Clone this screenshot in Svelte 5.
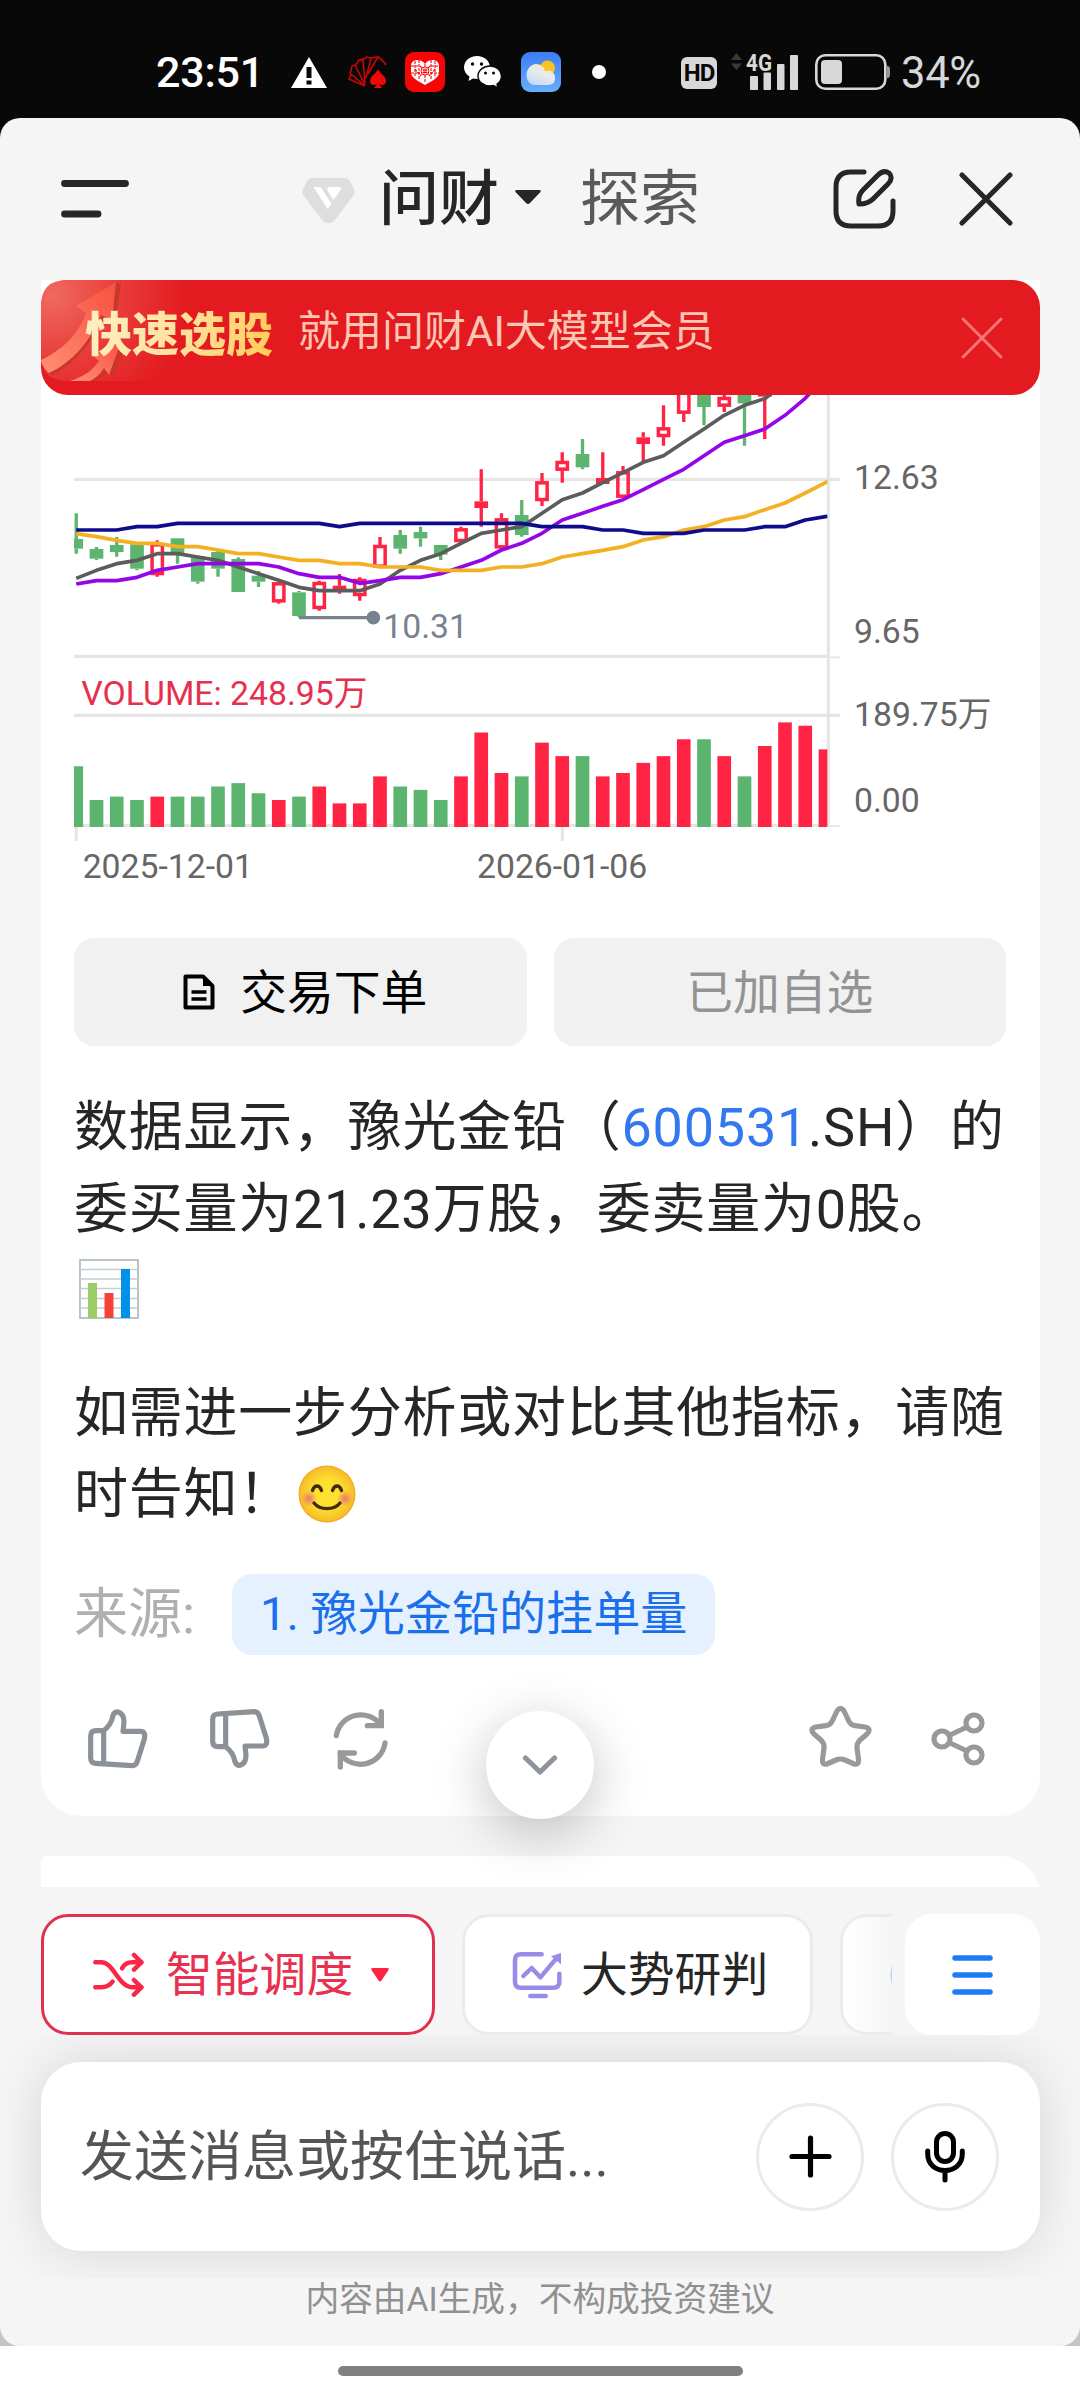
<script>
	const RED = '#ff2444';
	const GREEN = '#5bb56e';

	// x of the middle of the candle at index i
	const cx = (i) => 108.75 + i * 60.75;

	// [color, high, body top, body bottom, low, hollow]
	const candles = [
		['g', 400, 477, 506, 521],
		['g', 501, 507, 536, 540],
		['g', 471, 495, 516, 530],
		['g', 490, 493, 566, 571],
		['r', 481, 490, 585, 590, true],
		['g', 475, 475, 523, 551],
		['g', 530, 530, 605, 611],
		['g', 513, 516, 566, 590],
		['g', 532, 537, 636, 636],
		['g', 573, 587, 605, 621],
		['r', 605, 607, 667, 671, true],
		['g', 633, 637, 708, 712],
		['r', 602, 606, 687, 692, true],
		['r', 582, 617, 630, 641],
		['r', 592, 597, 648, 662, true],
		['r', 471, 495, 563, 563, true],
		['g', 450, 465, 506, 521],
		['g', 440, 456, 475, 500],
		['g', 495, 495, 524, 540],
		['r', 440, 445, 486, 487, true],
		['r', 268, 364, 384, 440],
		['r', 400, 415, 505, 507, true],
		['g', 360, 405, 465, 470],
		['r', 279, 304, 363, 378, true],
		['r', 217, 243, 272, 308, true],
		['g', 177, 222, 262, 268],
		['r', 217, 294, 312, 312],
		['r', 258, 274, 353, 353, true],
		['r', 157, 172, 192, 243],
		['r', 76, 142, 171, 197, true],
		['r', 20, 20, 101, 126, true],
		['g', 20, 20, 81, 136],
		['r', 20, 51, 80, 96, true],
		['g', 20, 20, 70, 197],
		['r', 20, 20, 50, 177]
	];

	const volumes = [
		18, 8, 9, 8, 9, 9, 9, 12, 13, 10, 8, 9, 12, 7, 7, 15, 12, 11, 8, 15, 28, 16, 15, 25, 21, 21, 15,
		16, 19, 21, 26, 26, 21, 15, 24, 31, 30, 23
	];
	const volumeColors = 'ggggrgggggrgrrrrgggrrrgrrgrrrrrgrgrrrr';

	const averages = [
		{
			color: '#5c5c5c',
			points: [
				595, 571, 551, 541, 521, 521, 531, 541, 561, 581, 601, 622, 632, 632, 632, 612, 571, 541, 521,
				490, 460, 450, 440, 400, 359, 339, 308, 278, 247, 227, 187, 147, 106, 76, 56, 10
			]
		},
		{
			color: '#9406e6',
			points: [
				612, 602, 602, 592, 571, 561, 551, 551, 551, 551, 561, 581, 592, 592, 610, 602, 592, 592, 581,
				561, 541, 510, 490, 460, 420, 400, 379, 359, 329, 298, 268, 227, 187, 167, 147, 106, 55, -10
			]
		},
		{
			color: '#f3b021',
			points: [
				461, 470, 481, 490, 490, 500, 500, 510, 521, 521, 531, 541, 541, 551, 551, 561, 561, 561, 571,
				571, 571, 561, 561, 551, 531, 521, 511, 500, 480, 470, 450, 440, 420, 410, 389, 369, 339, 308,
				280
			]
		},
		{
			color: '#0c0c8c',
			points: [
				450, 450, 450, 440, 440, 430, 430, 430, 430, 430, 430, 430, 430, 440, 430, 430, 430, 430, 430,
				430, 430, 430, 430, 440, 440, 440, 450, 450, 460, 460, 460, 450, 450, 450, 440, 440, 420, 410,
				400
			]
		}
	];

	const toLine = (points) => points.map((y, i) => `${cx(i)},${y}`).join(' ');
	const fill = (c) => (c === 'r' ? RED : GREEN);

	const axisLabels = [
		{ text: '12.63', y: 328 },
		{ text: '9.65', y: 788 },
		{ text: '189.75万', y: 1038 },
		{ text: '0.00', y: 1295 }
	];
</script>

<div class="status-bar">
	<span class="time">23:51</span>
	<svg class="warn" width="36" height="31" viewBox="0 0 36 31">
		<path d="M18 0 36 31H0z" fill="#fff" />
		<path d="M15.500 10h5v11h-5zM15.500 23.500h5v4h-5z" fill="#080808" />
	</svg>
	<svg class="cards" width="40" height="34" viewBox="0 0 40 34">
		<g fill="none" stroke="#c80505" stroke-width="1.600">
			<path d="M18 31 2 24l2-5 14 12M3 19l2-8 3-1 10 20M8 11l4-6 4-1 2 24M14 6l6-4 4 1-5 20M22 3l9-1-10 17M31 2c4 2 6 5 8 8" />
		</g>
		<path d="M31 14c2 5 8 7 8 12 0 4-4 5-7 3l3 4h-8l3-4c-3 2-7 1-7-3 0-5 6-7 8-12z" fill="#f00808" />
	</svg>
	<svg class="heart" width="40" height="40" viewBox="0 0 40 40">
		<rect width="40" height="40" rx="9" fill="#f70505" />
		<path d="M20 12c4-6 14-5 14 2v7c0 5-9 9-14 12C15 30 6 26 6 21v-7c0-7 10-8 14-2z" fill="#fff" />
		<path
			d="M10 9v16M14 8v20M26 8v20M30 9v16M6 14h8M6 21h9M26 14h8M25 21h9M20 12v4M20 23v8M15 14l10 10M25 14 15 24M10 17l4 5M30 17l-4 5"
			stroke="#f70505"
			stroke-width="1.100"
			stroke-dasharray="3 1"
			fill="none"
		/>
		<circle cx="20" cy="19" r="4" fill="#fff" stroke="#f70505" />
		<path d="M17.500 18h5M17.500 20.500h5M19 16.500v5M21 16.500v5" stroke="#f70505" />
	</svg>
	<svg class="wechat" width="38" height="33" viewBox="0 0 38 33">
		<path d="M13 0c7.500 0 13 5 13 11.500S20 23 13 23l-4-.5L4.500 25l1-4.500C2 18.500 0 15 0 11.500 0 5 5.500 0 13 0z" fill="#fff" />
		<path d="M26 10c6.500 0 11.500 4.300 11.500 10 0 3.200-1.500 6-4.500 8l1 3.800-4.500-2.300-3.500.5c-6.500 0-12-4.300-12-10s5.500-10 12-10z" fill="#fff" stroke="#080808" stroke-width="1.400" />
		<g fill="#080808">
			<circle cx="8.500" cy="8" r="1.700" />
			<circle cx="17.500" cy="8" r="1.700" />
			<circle cx="21.500" cy="17" r="1.500" />
			<circle cx="29.500" cy="17" r="1.500" />
		</g>
	</svg>
	<svg class="weather" width="40" height="40" viewBox="0 0 40 40">
		<defs>
			<linearGradient id="sky" x2="0" y2="1">
				<stop offset="0" stop-color="#3c7df5" />
				<stop offset="1" stop-color="#69aefb" />
			</linearGradient>
			<linearGradient id="cloud" x1="1" y1="0" x2="0.400" y2="1">
				<stop offset="0" stop-color="#fbe29a" />
				<stop offset="0.500" stop-color="#e9ecee" />
				<stop offset="1" stop-color="#c9dcf0" />
			</linearGradient>
		</defs>
		<rect width="40" height="40" rx="9" fill="url(#sky)" />
		<circle cx="26.500" cy="16" r="7.500" fill="#fcc21f" />
		<path d="M15 12c5 0 8 3 9 7 6-2 10 2 10 7s-3 7-7 7H14c-5 0-8.500-4-8.500-10S10 12 15 12z" fill="url(#cloud)" />
	</svg>
	<span class="dot"></span>

	<span class="hd">HD</span>
	<svg class="signal" width="68" height="48" viewBox="0 -10 68 48">
		<path d="M5.500 0 11 7H0zM5.500 17 0 10.500h11z" fill="#3a3a3a" />
		<text x="15" y="18" class="net" textLength="26" lengthAdjust="spacingAndGlyphs">4G</text>
		<g fill="#d8d8d8">
			<rect x="19" y="23" width="8" height="14" rx="1" />
			<rect x="32.500" y="19.500" width="7.500" height="17.500" rx="1" />
			<rect x="46" y="11" width="7.500" height="26" rx="1" />
			<rect x="59" y="2" width="8" height="35" rx="1" />
		</g>
	</svg>
	<svg class="battery" width="76" height="36" viewBox="0 0 76 36">
		<rect x="1.300" y="1.300" width="69" height="33.400" rx="9" fill="none" stroke="#d8d8d8" stroke-width="2.600" />
		<rect x="6" y="6" width="21" height="24" rx="4" fill="#d8d8d8" />
		<path d="M72 12c3 0 3 2 3 6s0 6-3 6z" fill="#9a9a9a" />
	</svg>
	<span class="percent">34%</span>
</div>

<div class="backdrop">
	<div class="sheet">
		<header>
			<svg class="menu" width="68" height="38" viewBox="0 0 68 38">
				<path d="M3.500 3.500h61M3.500 34h33.500" stroke="#262626" stroke-width="6.800" stroke-linecap="round" />
			</svg>
			<svg class="vip" width="53" height="45" viewBox="0 0 53 45">
				<path d="M10 0h33q3 0 5 3l4.300 9q1.400 2.500-.5 5L33 42q-2 3-6.500 3T20 42L1.200 17q-1.900-2.500-.5-5L5 3q2-3 5-3z" fill="#dedede" />
				<path d="M11.500 9h6q1.500 0 2.500 2l9.500 15-4 5zM27.500 9H37q3 0 1.500 3l-7 10-5.500-8.500q-2-4.500 1.500-4.500z" fill="#fff" />
			</svg>
			<span class="tab active">问财</span>
			<svg class="caret" width="26" height="15" viewBox="0 0 26 15">
				<path d="M2 0h22q3 0 1 2.500L15 13q-2 2-4 0L1 2.500Q-1 0 2 0z" fill="#262626" />
			</svg>
			<span class="tab">探索</span>
			<svg class="edit" width="63" height="60" viewBox="0 0 63 60">
				<g fill="none" stroke="#262626" stroke-width="5" stroke-linecap="round" stroke-linejoin="round">
					<path d="M31 3H18C8 3 3 8 3 18v24c0 10 5 15 15 15h27c10 0 15-5 15-15V32" />
					<path d="M26 35c-1-6 0-10 4-14L45 6c4-4 8-4 11-2 3 3 3 7-1 11L40 30c-4 4-8 5-14 5z" />
				</g>
			</svg>
			<svg class="close" width="54" height="54" viewBox="0 0 54 54">
				<path d="m3 3 48 48M51 3 3 51" stroke="#262626" stroke-width="5" stroke-linecap="round" />
			</svg>
		</header>

		<div class="scroll">
			<div class="card">
				<div class="banner">
					<svg class="banner-art" width="150" height="101" viewBox="0 0 150 101">
						<defs>
							<radialGradient id="glow" cx="12" cy="15" r="135" gradientUnits="userSpaceOnUse">
								<stop offset="0" stop-color="#f0695f" />
								<stop offset="0.500" stop-color="#e83b3a" />
								<stop offset="1" stop-color="#e31b20" />
							</radialGradient>
							<linearGradient id="arrow" x1="1" y1="0" x2="0" y2="1">
								<stop offset="0" stop-color="#f8503f" />
								<stop offset="1" stop-color="#ff8f73" />
							</linearGradient>
						</defs>
						<path d="M26 0h124v101H26Q0 101 0 75V26Q0 0 26 0z" fill="url(#glow)" />
						<path d="m75 2 5 2-6 40-12-6C52 62 32 85 12 95l-4-2z" fill="#c8372b" />
						<path d="m75 2-4 38-11-5C50 60 32 82 8 93Q1 87 0 80c20-9 38-26 45-47l-10-7z" fill="url(#arrow)" />
						<path d="m81 65 3 2-12 29-5-3-14 8h-8z" fill="#c8372b" />
						<path d="m80 62-12 33-5-7c-4 6-8 10-14 13H29c13-4 22-10 29-20l-6-5z" fill="url(#arrow)" />
					</svg>
					<span class="banner-title">快速选股</span>
					<span class="banner-text">就用问财AI大模型会员</span>
					<svg width="42" height="42" viewBox="0 0 42 42">
						<path d="m2 2 38 38M40 2 2 40" stroke="#f57675" stroke-width="3" stroke-linecap="round" />
					</svg>
				</div>

				<svg class="chart" width="932" height="510" viewBox="102 45 2796 1530">
					<defs>
						<clipPath id="plot"><rect x="102" y="45" width="2260" height="1300" /></clipPath>
					</defs>
					<g stroke="#e5e5e5" stroke-width="9.500">
						<path d="M102 298H2400M102 829H2362M102 1006H2400M102 1336.500H2362M2365 45V1341" />
						<path d="M2362 832H2400M2362 1338H2400" stroke-width="5" />
						<path d="M108.500 1341v42M1567 1341v42" />
					</g>

					<g clip-path="url(#plot)">
						{#each volumes as v, i}
							<rect x={cx(i) - 20.5} y={1341 - v * 10.125} width="41" height={v * 10.125} fill={fill(volumeColors[i])} />
						{/each}

						{#each candles as [c, high, top, bottom, low, hollow], i}
							<path d="M{cx(i)} {high}V{top}M{cx(i)} {bottom}V{low}" stroke={fill(c)} stroke-width="10" />
							{#if hollow}
								<rect x={cx(i) - 15.5} y={top + 4.5} width="31" height={bottom - top - 9} fill="none" stroke={fill(c)} stroke-width="10.500" />
							{:else}
								<rect x={cx(i) - 20.5} y={top} width="41" height={bottom - top} fill={fill(c)} />
							{/if}
						{/each}

						{#each averages as { color, points }}
							<polyline points={toLine(points)} fill="none" stroke={color} stroke-width="11" stroke-linejoin="round" />
						{/each}
					</g>

					<path d="M777 713H1000" stroke="#78828f" stroke-width="10" />
					<circle cx="1000" cy="713" r="20.500" fill="#78828f" />
					<text x="1030" y="773" fill="#78828f">10.31</text>
					<text x="124" y="975" fill="#e5304e">VOLUME: 248.95万</text>

					<g fill="#666">
						{#each axisLabels as label}
							<text x="2442" y={label.y}>{label.text}</text>
						{/each}
						<text x="128" y="1493">2025-12-01</text>
						<text x="1311" y="1493">2026-01-06</text>
					</g>
				</svg>

				<div class="buttons">
					<button class="trade">
						<svg width="32" height="36" viewBox="0 0 32 36">
							<path d="M2.500 2.500h17.500L29.500 12v21.500h-27z" fill="none" stroke="#000" stroke-width="4" stroke-linejoin="round" />
							<path d="M20 2v10h10z" />
							<path d="M8.500 18h15M8.500 25h15" stroke="#000" stroke-width="3.400" />
						</svg>
						<span>交易下单</span>
					</button>
					<button class="added"><span>已加自选</span></button>
				</div>

				<p>
					数据显示，豫光金铅（<a href="#stock">600531</a>.SH）的<br />委买量为21.23万股，委卖量为0股。<br />
					<svg class="emoji" width="60" height="60" viewBox="0 0 60 60">
						<rect x="1" y="1" width="58" height="58" fill="#fff" stroke="#b0bec5" stroke-width="1.800" />
						<path d="M1 10.500h58M1 20h58M1 29.500h58M1 39.500h58M1 49h58" stroke="#c4ced3" stroke-width="1.600" />
						<path d="M9 24h9v35H9z" fill="#9ccc65" />
						<path d="M25.500 34h9v25h-9z" fill="#f44336" />
						<path d="M42 10h9v49h-9z" fill="#0091ea" />
					</svg>
				</p>

				<p>
					如需进一步分析或对比其他指标，请随<br />时告知！<svg class="emoji" width="58" height="58" viewBox="0 0 58 58">
						<defs>
							<radialGradient id="face">
								<stop offset="0.500" stop-color="#fde030" />
								<stop offset="0.920" stop-color="#f7c02b" />
								<stop offset="1" stop-color="#f4a223" />
							</radialGradient>
							<radialGradient id="blush">
								<stop offset="0" stop-color="#ed7770" />
								<stop offset="1" stop-color="#ed7770" stop-opacity="0" />
							</radialGradient>
						</defs>
						<circle cx="29" cy="29" r="28.500" fill="url(#face)" />
						<circle cx="11" cy="33.500" r="8" fill="url(#blush)" />
						<circle cx="47" cy="33.500" r="8" fill="url(#blush)" />
						<g fill="none" stroke="#422b0d" stroke-width="3.400" stroke-linecap="round">
							<path d="M14.500 25.500c2-6 7-6 9 0M34.500 25.500c2-6 7-6 9 0" />
							<path d="M16 38c6 7.500 20 7.500 26 0" />
						</g>
					</svg>
				</p>

				<div class="sources">
					<span>来源:</span>
					<a class="source" href="#source">1. 豫光金铅的挂单量</a>
				</div>

				<div class="actions">
					<svg class="up" width="60" height="60" viewBox="0 0 180 180">
						<g fill="none" stroke="#8c9197" stroke-width="15.500" stroke-linejoin="round">
							<path d="M47 65H24Q8 65 8 81v66q0 15 15 16l110 7q11 0 15-13l21-67q5-23-12-23h-52l3-28q0-25-18-30-12-2-16 14-4 24-27 42z" />
							<path d="M47 65v98" />
						</g>
					</svg>
					<svg class="down" width="60" height="60" viewBox="0 0 180 180">
						<g transform="translate(0 178) scale(1 -1)" fill="none" stroke="#8c9197" stroke-width="15.500" stroke-linejoin="round">
							<path d="M47 65H24Q8 65 8 81v66q0 15 15 16l110 7q11 0 15-13l21-67q5-23-12-23h-52l3-28q0-25-18-30-12-2-16 14-4 24-27 42z" />
							<path d="M47 65v98" />
						</g>
					</svg>
					<svg class="refresh" width="55" height="62" viewBox="0 0 165 186">
						<g fill="none" stroke="#999" stroke-width="16" stroke-linecap="round">
							<path d="M10 83A74 74 0 0 1 143 51M156 105A74 74 0 0 1 22 137" />
							<path d="M145 11v42h-42M22 177v-42h42" />
						</g>
					</svg>
					<svg class="star" width="63" height="61" viewBox="0 0 63 61">
						<path
							d="M27.500 6Q31.500-1 35.500 6L40 15.500Q42 19 46 19.700L56 21Q63 23 58 28L50.500 34.500Q47.500 38 48 42L49.500 53.500Q50 60 44 57.500L36 54Q31.500 52 27 54L19 57.500Q13 60 13.500 53.500L15 42Q15.500 38 12.500 34.500L5 28Q0 23 7 21L17 19.700Q21 19 23 15.500Z"
							fill="none"
							stroke="#999"
							stroke-width="5.200"
							stroke-linejoin="round"
						/>
					</svg>
					<svg width="54" height="54" viewBox="0 0 54 54">
						<g fill="none" stroke="#999" stroke-width="5.200">
							<circle cx="11" cy="27" r="8" />
							<circle cx="43" cy="11" r="8" />
							<circle cx="43" cy="43" r="8" />
							<path d="m18 23.500 18-8.500M18 30.500l18 8.500" />
						</g>
					</svg>
				</div>
			</div>

			<div class="card next"></div>

			<button class="to-bottom" aria-label="scroll">
				<svg width="36" height="22" viewBox="0 0 36 22">
					<path d="m3.500 4 14.500 14L32.500 4" fill="none" stroke="#8f939b" stroke-width="5.200" stroke-linecap="round" stroke-linejoin="round" />
				</svg>
			</button>
		</div>

		<div class="modes">
			<div class="mode selected">
				<svg width="51" height="45" viewBox="0 0 153 135">
					<g fill="none" stroke="#fb2646" stroke-width="13.500" stroke-linecap="round" stroke-linejoin="round">
						<path d="M7 31h18c38 0 50 75 95 75h25M7 106h18q20 0 34-17M87 49q10-18 30-18h28" />
						<path d="m123 9 22 22-22 22M123 84l22 22-22 22" />
					</g>
				</svg>
				<span>智能调度</span>
				<svg class="mode-caret" width="18" height="14" viewBox="0 0 18 14">
					<path d="M1.500 0h15q2 0 1 2l-7 10.500q-1.500 2-3 0L.500 2Q-.5 0 1.500 0z" fill="#ff2444" />
				</svg>
			</div>
			<div class="mode market">
				<svg width="50" height="48" viewBox="0 0 150 144">
					<g fill="none" stroke="#978de8" stroke-width="13.500" stroke-linecap="round" stroke-linejoin="round">
						<path d="M89 10H26Q9 10 9 27v66q0 17 17 17h98q18 0 18-17V68" />
						<path d="m34 75 25-24 26 28 45-53M55 135h46" />
					</g>
					<path d="M147 6v34l-30-24z" fill="#978de8" />
				</svg>
				<span>大势研判</span>
			</div>
			<div class="mode cut">
				<svg width="2" height="20" viewBox="0 0 2 20">
					<path d="M2 0Q-1 10 2 20z" fill="#b9d2f5" />
				</svg>
			</div>
			<button class="all-modes" aria-label="modes">
				<svg width="41" height="42" viewBox="0 0 41 42">
					<path d="M3 4h35M3 21h35M3 38h35" stroke="#1e7bf6" stroke-width="5.500" stroke-linecap="round" />
				</svg>
			</button>
		</div>

		<div class="composer">
			<div class="input">
				<span>发送消息或按住说话...</span>
				<button aria-label="add">
					<svg width="43" height="43" viewBox="0 0 43 43">
						<path d="M21.500 3v37M3 21.500h37" stroke="#000" stroke-width="5.200" stroke-linecap="round" />
					</svg>
				</button>
				<button aria-label="voice">
					<svg width="40" height="52" viewBox="0 0 40 52">
						<g fill="none" stroke="#000" stroke-width="5" stroke-linecap="round">
							<rect x="11.500" y="2.500" width="17" height="28" rx="8.500" />
							<path d="M2.700 20v3c0 22 34.600 22 34.600 0v-3M20 40v9" />
						</g>
					</svg>
				</button>
			</div>
		</div>

		<footer>内容由AI生成，不构成投资建议</footer>
	</div>
</div>

<div class="nav"><span></span></div>

<style>
	:global(body) {
		background: #fff;
		font-family: Roboto, 'Noto Sans CJK SC', sans-serif;
		color: #262626;
	}

	svg {
		display: block;
		flex: none;
	}

	button {
		border: none;
		padding: 0;
		font: inherit;
		display: flex;
		align-items: center;
		justify-content: center;
	}

	a {
		color: #3478f0;
		text-decoration: none;
	}

	.status-bar {
		display: flex;
		align-items: center;
		box-sizing: border-box;
		height: 118px;
		padding: 26px 0 0 156px;
		background: #080808;
		color: #fff;
	}

	.time {
		width: 135px;
		font-size: 43px;
		font-weight: 500;
		letter-spacing: -0.2px;
	}

	.cards {
		margin-left: 20px;
	}

	.heart {
		margin-left: 18px;
	}

	.wechat {
		margin-left: 19px;
	}

	.weather {
		margin-left: 19px;
	}

	.dot {
		width: 14px;
		height: 14px;
		margin-left: 31px;
		border-radius: 50%;
		background: #fff;
	}

	.hd {
		width: 36px;
		height: 32px;
		margin: 2px 0 0 75px;
		border-radius: 6px;
		background: #d8d8d8;
		color: #080808;
		font-size: 24px;
		font-weight: 700;
		line-height: 33px;
		text-align: center;
		letter-spacing: -1px;
	}

	.signal {
		margin: -10px 0 0 14px;
	}

	.net {
		fill: #d8d8d8;
		font-size: 24px;
		font-weight: 700;
	}

	.battery {
		margin-left: 16px;
	}

	.percent {
		margin: 3px 0 0 10px;
		color: #d8d8d8;
		font-size: 43.5px;
		letter-spacing: -0.3px;
	}

	.backdrop {
		background: linear-gradient(#080808 50%, #c4c4c4 50%);
	}

	.sheet {
		height: 2228px;
		border-radius: 20px;
		background: #f5f5f5;
		overflow: hidden;
	}

	header {
		display: flex;
		align-items: center;
		height: 162px;
		padding-left: 61px;
	}

	.vip {
		margin-left: 173px;
		margin-top: 3px;
	}

	.tab {
		margin-top: 2px;
		font-size: 60px;
		line-height: 80px;
		color: #5a5a5a;
	}

	.tab.active {
		margin-left: 24px;
		color: #262626;
		font-weight: 500;
	}

	.caret {
		margin: -3px 39px 0 16px;
	}

	.edit {
		margin-left: 133px;
	}

	.close {
		margin-left: 63px;
	}

	.scroll {
		position: relative;
		height: 1607px;
		overflow: hidden;
	}

	.card {
		width: 932px;
		height: 1536px;
		margin-left: 41px;
		padding: 0 34px 0 33px;
		border-radius: 0 0 40px 40px;
		background: #fff;
	}

	.card.next {
		height: 60px;
		margin-top: 40px;
		border-radius: 6px 40px 0 0;
	}

	.banner {
		position: relative;
		display: flex;
		align-items: center;
		width: 918px;
		height: 115px;
		margin-left: -33px;
		padding: 0 37px 0 44px;
		border-radius: 27px;
		background: #e31b20;
	}

	.banner-art {
		position: absolute;
		left: 0;
		top: 0;
	}

	.banner-title {
		position: relative;
		margin-top: -14px;
		font-size: 47px;
		font-weight: 900;
		background: linear-gradient(100deg, #fff0c4, #ffe09a 55%, #ffcb55);
		background-clip: text;
		color: transparent;
	}

	.banner-text {
		flex: 1;
		margin: -20px 0 0 25px;
		font-size: 42px;
		color: #ffc6b4;
	}

	.chart {
		font-size: 101.2px;
	}

	.buttons {
		display: grid;
		grid-template-columns: 1fr 1fr;
		gap: 27px;
		margin-top: 33px;
	}

	.buttons button {
		height: 108px;
		border-radius: 20px;
		background: #f1f1f1;
		font-size: 46.8px;
		gap: 25px;
	}

	.buttons span {
		margin-top: -8px;
	}

	.buttons .trade {
		padding-left: 10px;
		color: #000;
	}

	.added {
		color: #939393;
	}

	p {
		margin: 41px 0 36px;
		font-size: 54px;
		line-height: 81.6px;
		letter-spacing: 0.75px;
		white-space: nowrap;
	}

	p + p {
		margin-bottom: 38px;
	}

	.emoji {
		display: inline-block;
		vertical-align: -10px;
		margin-left: 5px;
	}

	.sources {
		display: flex;
		align-items: center;
		height: 81px;
		font-size: 54px;
		color: #b0b0b0;
	}

	.sources span {
		margin-top: -10px;
	}

	.source {
		height: 81px;
		margin-left: 37px;
		padding: 0 28px;
		border-radius: 20px;
		background: #e6f1ff;
		color: #1a6fea;
		font-size: 47.1px;
		line-height: 80px;
	}

	.actions {
		display: flex;
		align-items: center;
		height: 168px;
		padding-left: 14px;
	}

	.down {
		margin-left: 62px;
	}

	.refresh {
		margin-left: 63px;
	}

	.star {
		margin: -4px 59px 0 auto;
	}

	.actions svg:last-child {
		margin-right: 21px;
	}

	.to-bottom {
		position: absolute;
		left: 486px;
		top: 1431px;
		width: 108px;
		height: 108px;
		border-radius: 50%;
		background: #fff;
		box-shadow: 0 13px 54px rgba(0, 0, 0, 0.24);
	}

	.modes {
		display: flex;
		height: 121px;
		padding: 27px 0 0 41px;
	}

	.mode {
		box-sizing: border-box;
		display: flex;
		align-items: center;
		border: 3px solid #ebebeb;
		border-radius: 27px;
		background: #fff;
		font-size: 46.8px;
	}

	.mode span {
		margin-top: -8px;
	}

	.mode.selected {
		width: 394px;
		padding-left: 49px;
		border-color: #e0304f;
		color: #e8304f;
		gap: 22px;
	}

	.mode-caret {
		margin-left: -4px;
	}

	.mode.market {
		width: 351px;
		margin-left: 27px;
		padding-left: 47px;
		gap: 19px;
	}

	.mode.cut {
		width: 52px;
		margin: 0 13px 0 27px;
		justify-content: flex-end;
		border-right: none;
		border-radius: 27px 0 0 27px;
		background: linear-gradient(90deg, #fff, #f6f6f6);
	}

	.all-modes {
		width: 135px;
		border-radius: 27px;
		background: #fff;
	}

	.composer {
		height: 243px;
		padding: 27px 40px 0 41px;
		box-sizing: border-box;
		overflow: hidden;
	}

	.input {
		box-sizing: border-box;
		display: flex;
		align-items: center;
		height: 189px;
		padding: 0 41px 0 39px;
		border-radius: 40px;
		background: #fff;
		box-shadow: 0 0 54px rgba(0, 0, 0, 0.13);
		font-size: 54px;
		color: #555;
		gap: 27px;
	}

	.input span {
		flex: 1;
		margin-top: -8px;
	}

	.input button {
		box-sizing: border-box;
		width: 108px;
		height: 108px;
		border: 3px solid #ebebeb;
		border-radius: 50%;
		background: #fff;
	}

	footer {
		color: #909090;
		font-size: 33.7px;
		line-height: 43px;
		text-align: center;
	}

	.nav {
		height: 54px;
		display: flex;
		justify-content: center;
		background: #fff;
	}

	.nav span {
		width: 405px;
		height: 10px;
		margin-top: 20px;
		border-radius: 5px;
		background: #808080;
	}
</style>
